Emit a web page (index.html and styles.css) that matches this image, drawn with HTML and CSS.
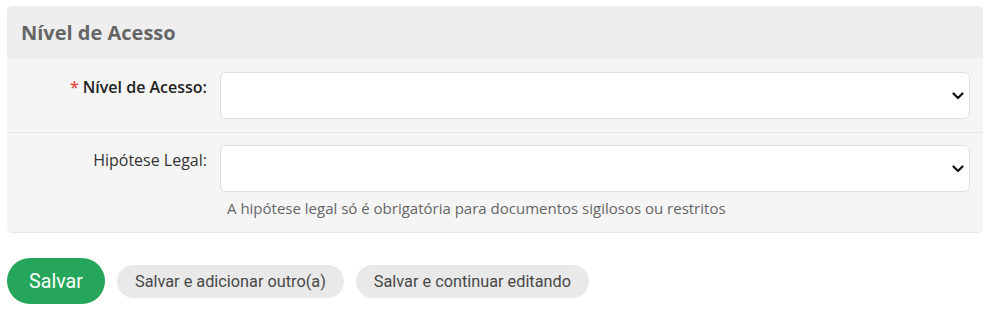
FILE: index.html
```html
<!DOCTYPE html>
<html lang="pt-BR">
<head>
<meta charset="utf-8">
<title>Nível de Acesso</title>
<link rel="stylesheet" href="styles.css">
</head>
<body>
<div class="page">
  <fieldset class="module">
    <h2 class="module-title">Nível de Acesso</h2>
    <div class="form-row">
      <label class="field-label required" for="nivel"><span class="star">*</span> Nível de Acesso:</label>
      <div class="field">
        <div class="select-wrap">
          <select id="nivel" class="select"><option></option></select>
          <svg class="chevron" width="12" height="8" viewBox="0 0 12 8" aria-hidden="true"><polyline points="1.5,1.5 6,6 10.5,1.5" fill="none" stroke="#111" stroke-width="2.2" stroke-linecap="round" stroke-linejoin="round"/></svg>
        </div>
      </div>
    </div>
    <div class="form-row last">
      <label class="field-label" for="hipotese">Hipótese Legal:</label>
      <div class="field">
        <div class="select-wrap">
          <select id="hipotese" class="select"><option></option></select>
          <svg class="chevron" width="12" height="8" viewBox="0 0 12 8" aria-hidden="true"><polyline points="1.5,1.5 6,6 10.5,1.5" fill="none" stroke="#111" stroke-width="2.2" stroke-linecap="round" stroke-linejoin="round"/></svg>
        </div>
        <div class="help">A hipótese legal só é obrigatória para documentos sigilosos ou restritos</div>
      </div>
    </div>
  </fieldset>
  <div class="submit-row">
    <button class="btn btn-primary" type="submit">Salvar</button>
    <button class="btn btn-secondary" type="submit">Salvar e adicionar outro(a)</button>
    <button class="btn btn-secondary" type="submit">Salvar e continuar editando</button>
  </div>
</div>
</body>
</html>
```
FILE: styles.css
```css
html, body {
  margin: 0;
  padding: 0;
  background: #ffffff;
}
.page {
  padding: 6px 11px 0 7px;
  font-family: "Open Sans", "Liberation Sans", sans-serif;
}
.module {
  margin: 0;
  padding: 0;
  border: none;
  border-radius: 5px;
  background: #f5f5f5;
  box-shadow: 0 1px 1px rgba(0,0,0,0.10);
  overflow: hidden;
}
.module-title {
  margin: 0;
  height: 53px;
  box-sizing: border-box;
  padding: 0 14px;
  display: flex;
  align-items: center;
  background: #eeeeee;
  color: #666666;
  font-size: 20px;
  font-weight: 700;
}
.form-row {
  display: flex;
  gap: 13px;
  padding: 13px 13px 13px 0;
  border-bottom: 1px solid #e9e9e9;
}
.form-row.last {
  border-bottom: none;
  padding-top: 12px;
  padding-bottom: 14px;
}
.field-label {
  width: 200px;
  flex: none;
  text-align: right;
  font-size: 16px;
  line-height: 22px;
  padding-top: 4px;
  color: #333333;
}
.field-label.required {
  font-weight: 600;
  color: #222222;
}
.star {
  color: #e74c3c;
  font-weight: 600;
}
.field {
  flex: 1;
  min-width: 0;
}
.select-wrap {
  position: relative;
}
.select {
  display: block;
  width: 100%;
  height: 47px;
  box-sizing: border-box;
  appearance: none;
  -webkit-appearance: none;
  background: #ffffff;
  border: 1px solid #dddddd;
  border-radius: 6px;
  font-family: "Open Sans", sans-serif;
  font-size: 15px;
  padding: 0 36px 0 12px;
}
.chevron {
  position: absolute;
  right: 6px;
  top: 20px;
  pointer-events: none;
}
.help {
  margin-top: 6px;
  padding-left: 7px;
  font-size: 15px;
  line-height: 20px;
  color: #666666;
}
.submit-row {
  display: flex;
  align-items: center;
  gap: 12px;
  margin-top: 26px;
}
.btn {
  border: none;
  border-radius: 999px;
  font-family: Roboto, "Liberation Sans", sans-serif;
  cursor: pointer;
}
.btn-primary {
  height: 46px;
  padding: 0 22px;
  background: #26a65b;
  color: #ffffff;
  font-size: 19.7px;
}
.btn-secondary {
  height: 33px;
  padding: 0 18px;
  background: #e9e9e9;
  color: #484848;
  font-size: 16.3px;
}
```
